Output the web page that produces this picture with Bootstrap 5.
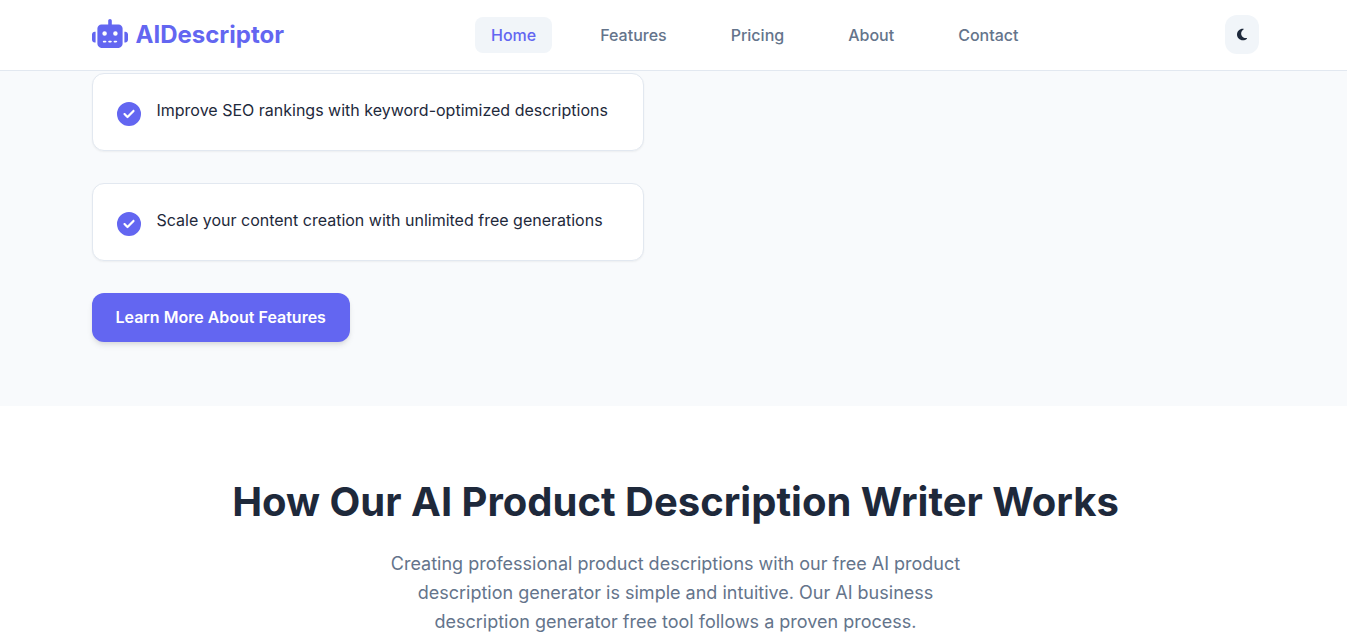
<!DOCTYPE html>
<html lang="en">
<head>
<meta charset="utf-8">
<meta name="viewport" content="width=device-width, initial-scale=1">
<title>AIDescriptor</title>
<link href="https://cdn.jsdelivr.net/npm/bootstrap@5.3.0/dist/css/bootstrap.min.css" rel="stylesheet">
<style>
  :root { --brand: #6366f1; --ink: #1e293b; --muted: #64748b; --line: #e2e8f0; --soft: #f1f5f9; }
  body { font-family: Inter, "Liberation Sans", sans-serif; font-size: 16px; line-height: 24px; color: var(--ink); background: #fff; }
  .band { padding-left: 4px; }
  .wrap { max-width: 1200px; padding-left: 16px; padding-right: 16px; }
  .site-header { border-bottom: 1px solid var(--line); background: #fff; }
  .site-header .navbar { padding: 15px 0 16px; }
  .brand { color: var(--brand); font-size: 24px; line-height: 38px; font-weight: 700; gap: 8px; margin: 0; padding: 0; }
  .brand:hover { color: var(--brand); }
  .brand svg { margin-bottom: 2px; }
  .menu { gap: 32px; }
  .site-header .menu .nav-link { padding: 8px 16px; line-height: 20px; font-weight: 500; color: var(--muted); border-radius: 8px; }
  .site-header .menu .nav-link.active { color: var(--brand); background: var(--soft); }
  .theme-btn { background: var(--soft); border: 0; border-radius: 12px; padding: 12px; line-height: 15px; color: var(--ink); }
  .benefits { background: #f8fafc; padding-top: 2px; padding-bottom: 64px; }
  .benefit-list { gap: 32px; margin-bottom: 32px; }
  .benefit { background: #fff; border: 1px solid var(--line); border-radius: 12px; padding: 24px; gap: 16px; box-shadow: 0 1px 2px rgba(0,0,0,.05); }
  .benefit svg { color: var(--brand); margin-top: 4px; }
  .more-btn { --bs-btn-color: #fff; --bs-btn-bg: var(--brand); --bs-btn-border-width: 0; --bs-btn-hover-color: #fff; --bs-btn-hover-bg: #4f46e5; --bs-btn-padding-x: 24px; --bs-btn-padding-y: 12px; --bs-btn-border-radius: 12px; --bs-btn-font-weight: 600; --bs-btn-line-height: 25px; box-shadow: 0 4px 6px -1px rgba(0,0,0,.1), 0 2px 4px -1px rgba(0,0,0,.06); }
  .works { padding-top: 64px; }
  .works h2 { font-size: 40px; line-height: 64px; font-weight: 700; margin-bottom: 15px; }
  .works p { max-width: 600px; font-size: 18px; line-height: 29px; color: var(--muted); }
</style>
</head>
<body>
<header class="site-header band">
  <nav class="navbar navbar-expand" aria-label="Main">
    <div class="container-fluid wrap d-flex justify-content-between align-items-center">
      <a class="navbar-brand brand d-flex align-items-center" href="#">
        <svg width="36" height="29" viewBox="0 0 640 512" fill="currentColor" aria-hidden="true"><path d="M320 0c17.700 0 32 14.300 32 32V96H472c39.800 0 72 32.200 72 72V440c0 39.800-32.200 72-72 72H168c-39.800 0-72-32.200-72-72V168c0-39.800 32.200-72 72-72H288V32c0-17.700 14.300-32 32-32zM208 384c-8.800 0-16 7.200-16 16s7.200 16 16 16h32c8.800 0 16-7.200 16-16s-7.200-16-16-16H208zm96 0c-8.800 0-16 7.200-16 16s7.200 16 16 16h32c8.800 0 16-7.200 16-16s-7.200-16-16-16H304zm96 0c-8.800 0-16 7.200-16 16s7.200 16 16 16h32c8.800 0 16-7.200 16-16s-7.200-16-16-16H400zM264 256a40 40 0 1 0-80 0 40 40 0 1 0 80 0zm152 40a40 40 0 1 0 0-80 40 40 0 1 0 0 80zM48 224H64V416H48c-26.500 0-48-21.500-48-48V272c0-26.500 21.500-48 48-48zm544 0c26.500 0 48 21.500 48 48v96c0 26.500-21.500 48-48 48H576V224h16z"/></svg>
        <span>AIDescriptor</span>
      </a>
      <ul class="navbar-nav menu">
        <li class="nav-item"><a class="nav-link active" aria-current="page" href="#">Home</a></li>
        <li class="nav-item"><a class="nav-link" href="#">Features</a></li>
        <li class="nav-item"><a class="nav-link" href="#">Pricing</a></li>
        <li class="nav-item"><a class="nav-link" href="#">About</a></li>
        <li class="nav-item"><a class="nav-link" href="#">Contact</a></li>
      </ul>
      <button type="button" class="theme-btn d-flex align-items-center" aria-label="Toggle dark mode">
        <svg width="10" height="15" viewBox="0 0 384 512" fill="currentColor" aria-hidden="true"><path d="M223.500 32C100 32 0 132.300 0 256S100 480 223.500 480c60.600 0 115.500-24.200 155.800-63.400c5-4.900 6.300-12.500 3.100-18.700s-10.100-9.700-17-8.500c-9.800 1.700-19.800 2.600-30.100 2.600c-96.900 0-175.500-78.800-175.500-176c0-65.800 36-123.100 89.300-153.300c6.100-3.500 9.200-10.500 7.700-17.300s-7.300-11.900-14.300-12.500c-6.300-.5-12.600-.8-19-.8z"/></svg>
      </button>
    </div>
  </nav>
</header>
<main>
  <section class="benefits band">
    <div class="container-fluid wrap">
      <div class="row" style="--bs-gutter-x: 64px">
        <div class="col-12 col-lg-6">
          <ul class="benefit-list list-unstyled d-flex flex-column">
            <li class="benefit d-flex align-items-start">
              <svg class="flex-shrink-0" width="24" height="24" viewBox="0 0 512 512" fill="currentColor" aria-hidden="true"><path d="M256 512A256 256 0 1 0 256 0a256 256 0 1 0 0 512zM369 209L241 337c-9.400 9.400-24.600 9.400-33.900 0l-64-64c-9.400-9.400-9.400-24.600 0-33.900s24.600-9.400 33.900 0l47 47L335 175c9.400-9.400 24.600-9.400 33.900 0s9.400 24.600 0 33.900z"/></svg>
              <span>Improve SEO rankings with keyword-optimized descriptions</span>
            </li>
            <li class="benefit d-flex align-items-start">
              <svg class="flex-shrink-0" width="24" height="24" viewBox="0 0 512 512" fill="currentColor" aria-hidden="true"><path d="M256 512A256 256 0 1 0 256 0a256 256 0 1 0 0 512zM369 209L241 337c-9.400 9.400-24.600 9.400-33.900 0l-64-64c-9.400-9.400-9.400-24.600 0-33.900s24.600-9.400 33.900 0l47 47L335 175c9.400-9.400 24.600-9.400 33.900 0s9.400 24.600 0 33.900z"/></svg>
              <span>Scale your content creation with unlimited free generations</span>
            </li>
          </ul>
          <a class="btn more-btn" href="#">Learn More About Features</a>
        </div>
      </div>
    </div>
  </section>
  <section class="works band">
    <div class="container-fluid wrap text-center">
      <h2>How Our AI Product Description Writer Works</h2>
      <p class="mx-auto mb-0">Creating professional product descriptions with our free AI product description generator is simple and intuitive. Our AI business description generator free tool follows a proven process.</p>
    </div>
  </section>
</main>
<script src="https://cdn.jsdelivr.net/npm/bootstrap@5.3.0/dist/js/bootstrap.bundle.min.js"></script>
</body>
</html>
